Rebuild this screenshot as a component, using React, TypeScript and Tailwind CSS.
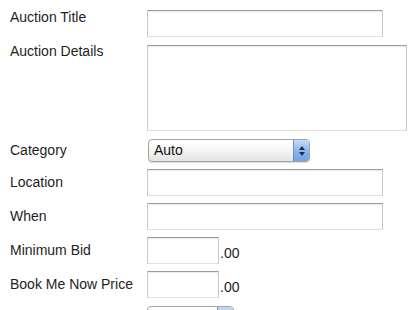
import React from "react";

function TextBox({ className = "" }: { className?: string }) {
    return (
        <div
            className={`h-[27px] bg-white border border-[#c9c9c9] border-t-[#9d9d9d] border-b-[#e0e0e0] shadow-[inset_0_1px_1px_rgba(0,0,0,0.08)] ${className}`}
        />
    );
}

function SelectBox({ value, className = "" }: { value: string; className?: string }) {
    return (
        <div
            className={`flex h-[23px] rounded-[4px] border border-[#a3a3a3] bg-gradient-to-b from-white via-[#f6f6f6] to-[#e3e3e3] shadow-[0_1px_1px_rgba(0,0,0,0.15)] overflow-hidden ${className}`}
        >
            <span className="flex-1 pl-[5px] text-[14px] leading-[21px] text-[#111]">{value}</span>
            <div className="w-[16px] flex flex-col items-center justify-center gap-[2px] border-l border-[#6e8fc0] bg-gradient-to-b from-[#c4dcf7] via-[#8db8ec] to-[#6ea3e6]">
                <svg width="6" height="4" viewBox="0 0 6 4">
                    <path d="M3 0 L6 4 L0 4 Z" fill="#1d2d4a" />
                </svg>
                <svg width="6" height="4" viewBox="0 0 6 4">
                    <path d="M0 0 L6 0 L3 4 Z" fill="#1d2d4a" />
                </svg>
            </div>
        </div>
    );
}

function Label({ children, className = "" }: { children: React.ReactNode; className?: string }) {
    return (
        <label className={`w-[147px] shrink-0 pl-[10px] text-[14px] leading-[16px] text-[#1e1e1e] ${className}`}>
            {children}
        </label>
    );
}

export default function App() {
    return (
        <div className="w-[414px] h-[310px] overflow-hidden bg-white pt-[10px] font-['Liberation_Sans',Arial,sans-serif]">
            <div className="flex flex-col">

                {/* Title */}
                <div className="flex items-start">
                    <Label className="-mt-[1px]">Auction Title</Label>
                    <TextBox className="w-[236px]" />
                </div>

                {/* Details */}
                <div className="flex items-start mt-[8px]">
                    <Label className="-mt-[2px]">Auction Details</Label>
                    <div className="w-[260px] h-[86px] bg-white border border-[#c9c9c9] border-t-[#9d9d9d] border-b-[#e0e0e0] shadow-[inset_0_1px_1px_rgba(0,0,0,0.08)]" />
                </div>

                {/* Category */}
                <div className="flex items-start mt-[8px]">
                    <Label className="mt-[3px]">Category</Label>
                    <SelectBox value="Auto" className="ml-[1px] w-[162px]" />
                </div>

                <div className="flex items-start mt-[7px]">
                    <Label className="mt-[5px]">Location</Label>
                    <TextBox className="w-[236px]" />
                </div>

                <div className="flex items-start mt-[7px]">
                    <Label className="mt-[5px]">When</Label>
                    <TextBox className="w-[236px]" />
                </div>

                <div className="flex items-start mt-[7px]">
                    <Label className="mt-[5px]">Minimum Bid</Label>
                    <TextBox className="w-[72px]" />
                    <span className="ml-[1px] mt-[8px] text-[14px] leading-[16px] text-[#1e1e1e]">.00</span>
                </div>

                <div className="flex items-start mt-[7px]">
                    <Label className="mt-[5px]">Book Me Now Price</Label>
                    <TextBox className="w-[72px]" />
                    <span className="ml-[1px] mt-[8px] text-[14px] leading-[16px] text-[#1e1e1e]">.00</span>
                </div>

                <div className="flex items-start mt-[8px]">
                    <Label className="mt-[3px]">Auction Duration</Label>
                    <SelectBox value="7 days" className="w-[87px]" />
                </div>
            </div>
        </div>
    );
}
